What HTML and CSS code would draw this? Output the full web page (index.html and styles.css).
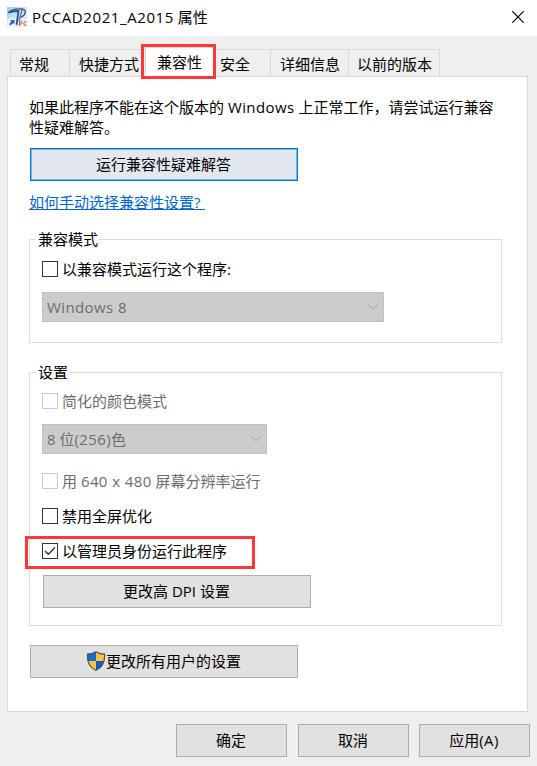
FILE: index.html
```html
<!DOCTYPE html>
<html lang="zh-CN">
<head>
    <meta charset="UTF-8">
    <meta name="viewport" content="width=device-width, initial-scale=1.0">
    <title>PCCAD2021_A2015 属性</title>
    <link rel="stylesheet" href="styles.css">
</head>
<body>
    <div class="dialog">
        <div class="titlebar">
            <svg class="app-icon" width="20" height="20" viewBox="0 0 20 20">
                <defs>
                    <linearGradient id="sky" x1="0" y1="0" x2="1" y2="1">
                        <stop offset="0" stop-color="#8fd0f2"/>
                        <stop offset="0.6" stop-color="#d9edf8"/>
                        <stop offset="1" stop-color="#eef5fa"/>
                    </linearGradient>
                </defs>
                <rect width="20" height="20" fill="url(#sky)"/>
                <path d="M1 6C4 2.500 11 1.500 15 2C20.500 3 18.500 8.500 13.500 10.500" fill="none" stroke="#3b4c78" stroke-width="1.300"/>
                <path d="M2.500 5.500C6 4 9 4 11.500 4L9.500 18" fill="none" stroke="#34508a" stroke-width="1.800"/>
                <path d="M15 3L12 14" fill="none" stroke="#53719f" stroke-width="1.300"/>
                <rect x="0.500" y="11.500" width="8" height="8" fill="#f4f9fd"/>
                <path d="M3 13H7.500V17.500L6 16L3.500 18.500L2 17L4.500 14.500Z" fill="#1f5fae"/>
                <path d="M12.500 19V14.500H14.500Q16 15.700 14.500 17H12.500M19.500 14.800Q16.800 14 16.800 16.700Q16.900 19 19.500 18.300" fill="none" stroke="#e0504a" stroke-width="1"/>
            </svg>
            <span class="title"><span class="latin">PCCAD2021_A2015</span> 属性</span>
            <svg class="close" width="12" height="12" viewBox="0 0 12 12">
                <path d="M0.300 0.300L11.700 11.700M11.700 0.300L0.300 11.700" stroke="#000" stroke-width="1.200"/>
            </svg>
        </div>

        <div class="tabs">
            <div class="tab general">常规</div>
            <div class="tab shortcut">快捷方式</div>
            <div class="tab active">兼容性<div class="mark mark-tab"></div></div>
            <div class="tab security">安全</div>
            <div class="tab details">详细信息</div>
            <div class="tab versions">以前的版本</div>
        </div>

        <div class="panel">
            <p class="intro">如果此程序不能在这个版本的 <span class="word">Windows</span> 上正常工作，请尝试运行兼容<br>性疑难解答。</p>
            <button class="button wide focused">运行兼容性疑难解答</button>
            <a class="help">如何手动选择兼容性设置?</a>

            <fieldset class="group compat">
                <legend>兼容模式</legend>
                <div class="option"><span class="box"></span>以兼容模式运行这个程序:</div>
                <div class="select select-os"><span class="word">Windows 8</span>
                    <svg width="10" height="6" viewBox="0 0 10 6"><path d="M0.500 0.500L5 5L9.500 0.500" fill="none" stroke="#a0a0a0"/></svg>
                </div>
            </fieldset>

            <fieldset class="group settings">
                <legend>设置</legend>
                <div class="option disabled"><span class="box"></span>简化的颜色模式</div>
                <div class="select select-color"><span>8 位<span class="word">(256)</span>色</span>
                    <svg width="10" height="6" viewBox="0 0 10 6"><path d="M0.500 0.500L5 5L9.500 0.500" fill="none" stroke="#a0a0a0"/></svg>
                </div>
                <div class="option disabled"><span class="box"></span><span>用 <span class="word">640 x 480</span> 屏幕分辨率运行</span></div>
                <div class="option"><span class="box"></span>禁用全屏优化</div>
                <div class="option">
                    <span class="box">
                        <svg width="14" height="14" viewBox="0 0 14 14"><path d="M2 7L5.300 10.300L12 3.600" fill="none" stroke="#333" stroke-width="1.400"/></svg>
                    </span>以管理员身份运行此程序
                    <div class="mark mark-admin"></div>
                </div>
                <button class="button wide dpi">更改高 DPI 设置</button>
            </fieldset>

            <button class="button wide all-users">
                <svg width="20" height="20" viewBox="0 0 20 20">
                    <path d="M10 0.500C7.500 2.300 4.500 3 1.500 3C1 10 2.500 16 10 19.500Z" fill="#0f6fcd"/>
                    <path d="M10 0.500C12.500 2.300 15.500 3 18.500 3C19 10 17.500 16 10 19.500Z" fill="#0b5fba"/>
                    <path d="M10 0.500C12.500 2.300 15.500 3 18.500 3Q18.700 7 18.100 10H10Z" fill="#ffc23c"/>
                    <path d="M1.900 10H10V19.500C5 17 2.700 14 1.900 10Z" fill="#ffc23c"/>
                    <path d="M10 0.800C7.500 2.500 4.500 3.200 1.500 3.200C1 10 2.500 16 10 19.300C17.500 16 19 10 18.500 3.200C15.500 3.200 12.500 2.500 10 0.800Z" fill="none" stroke="#4d5257" stroke-width="1.200"/>
                </svg>更改所有用户的设置
            </button>
        </div>

        <div class="footer">
            <button class="button ok">确定</button>
            <button class="button">取消</button>
            <button class="button apply">应用<span class="word">(A)</span></button>
        </div>
    </div>
</body>
</html>
```

FILE: styles.css
```css
* {
    box-sizing: border-box;
}

body {
    margin: 0;
    background-color: #efefef;
    color: #000;
    font-family: "Open Sans", "Noto Sans CJK SC", sans-serif;
    font-size: 15px;
}

.dialog {
    width: 537px;
    height: 766px;
    overflow: hidden;
}

.titlebar {
    display: flex;
    align-items: center;
    height: 36px;
    padding: 0 13px 2px 7px;
    background-color: #fff;
}

.title {
    flex: 1;
    padding-left: 5px;
    line-height: 20px;
    white-space: nowrap;
}

.latin {
    letter-spacing: 0.6px;
}

.word {
    letter-spacing: 0.4px;
}

.tabs {
    display: flex;
    align-items: flex-end;
    height: 40px;
    padding-left: 10px;
}

.tab {
    height: 27px;
    border-top: 1px solid #d9d9d9;
    border-left: 1px solid #d9d9d9;
    line-height: 29px;
    padding-left: 8px;
    white-space: nowrap;
}

.general {
    width: 59px;
}

.shortcut {
    width: 76px;
    padding-left: 9px;
}

.active {
    position: relative;
    width: 68px;
    height: 30px;
    margin-bottom: -1px;
    padding-left: 11px;
    background-color: #fff;
    line-height: 28px;
}

.security {
    width: 57px;
    border-left: none;
    padding-left: 7px;
}

.details {
    width: 78px;
    padding-left: 9px;
}

.versions {
    width: 92px;
    border-right: 1px solid #d9d9d9;
}

.mark {
    position: absolute;
    border: 3px solid #fd3838;
}

.mark-tab {
    left: -5px;
    top: -4px;
    width: 75px;
    height: 35px;
}

.mark-admin {
    left: -17px;
    top: -7px;
    width: 230px;
    height: 33px;
}

.panel {
    width: 521px;
    height: 636px;
    margin-left: 7px;
    padding: 20px 25px 0 21px;
    border: 1px solid #d9d9d9;
    background-color: #fff;
}

.intro {
    margin: 0 0 11px;
    line-height: 20px;
    white-space: nowrap;
}

.button {
    display: flex;
    justify-content: center;
    align-items: center;
    width: 111px;
    height: 33px;
    padding: 0 1px 2px 0;
    border: 1px solid #adadad;
    background-color: #e1e1e1;
    color: #000;
    font: inherit;
    line-height: 20px;
}

.wide {
    width: 268px;
    margin-left: 1px;
}

.focused {
    border-color: #0078d7;
    box-shadow: inset 0 0 0 1px #80b4e0;
    background-color: #e3e8f0;
}

.help {
    display: block;
    width: 176px;
    height: 17px;
    margin-top: 12px;
    border-bottom: 1px solid #0066cc;
    color: #0066cc;
    line-height: 18px;
    white-space: nowrap;
}

.group {
    width: 473px;
    margin: 0;
    border: 1px solid #dcdcdc;
}

.group legend {
    height: 19px;
    margin-left: -6px;
    padding: 0 1px 0 2px;
    line-height: 19px;
}

.compat {
    height: 113px;
    margin-top: 20px;
    padding: 12px;
}

.settings {
    height: 263px;
    margin-top: 20px;
    padding: 11px 12px 0;
}

.option {
    position: relative;
    display: flex;
    height: 16px;
    line-height: 16px;
    white-space: nowrap;
}

.box {
    width: 16px;
    height: 16px;
    margin-right: 4px;
    border: 1px solid #333;
    background-color: #fff;
}

.box svg {
    display: block;
}

.disabled {
    color: #6d6d6d;
}

.disabled .box {
    border-color: #ccc;
}

.select {
    display: flex;
    justify-content: space-between;
    align-items: center;
    height: 30px;
    margin-top: 15px;
    padding: 0 5px 0 4px;
    border: 1px solid #bfbfbf;
    background-color: #ccc;
    color: #6d6d6d;
    line-height: 20px;
}

.select-os {
    width: 342px;
}

.select-color {
    width: 225px;
}

.settings .select + .option,
.settings .option + .option {
    margin-top: 19px;
}

.dpi {
    margin-top: 16px;
}

.all-users {
    margin-top: 19px;
}

.footer {
    display: flex;
    justify-content: flex-end;
    gap: 10px;
    padding: 12px 7px 0 0;
}

.ok {
    margin-right: 1px;
}
```
